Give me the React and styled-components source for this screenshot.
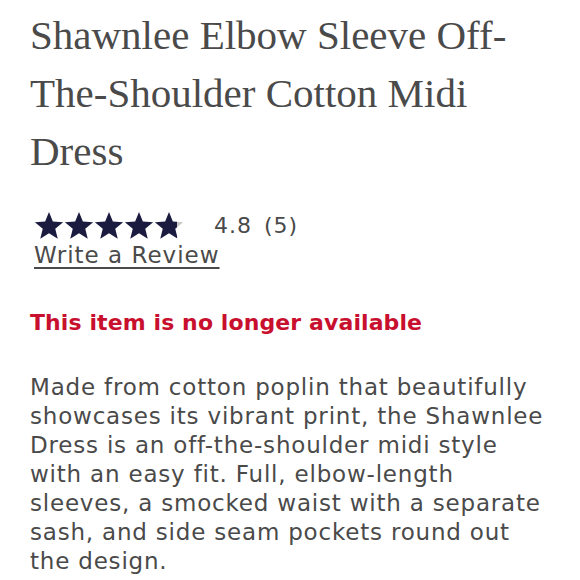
import React from "react";
import styled, { createGlobalStyle } from "styled-components";

const Global = createGlobalStyle`
  html, body { margin: 0; padding: 0; background: #fff; }
`;

const Page = styled.main`
  padding: 6px 0 0 30px;
  width: 580px;
  box-sizing: border-box;
`;

const Title = styled.h1`
  margin: 0;
  font-family: "Liberation Serif", serif;
  font-weight: 400;
  font-size: 41px;
  line-height: 58px;
  color: #4a4a4a;
`;

const Rating = styled.div`
  margin: 30px 0 0 4px;
  display: flex;
  flex-direction: column;
  align-items: flex-start;
`;

const StarsRow = styled.div`
  display: flex;
  align-items: center;
  gap: 30px;
`;

const Stars = styled.div`
  display: flex;
`;

const sans = `"DejaVu Sans", sans-serif`;

const Score = styled.span`
  font-family: ${sans};
  font-size: 22px;
  color: #4a4a4a;
  letter-spacing: 1px;
  word-spacing: 4px;
`;

const ReviewLink = styled.a`
  font-family: ${sans};
  font-size: 23px;
  line-height: 30px;
  letter-spacing: 1px;
  color: #4a4a4a;
  text-decoration: underline;
  text-decoration-thickness: 2px;
  text-underline-offset: 4px;
`;

const Notice = styled.p`
  margin: 40px 0 0;
  font-family: ${sans};
  font-weight: 600;
  font-size: 22px;
  letter-spacing: 0.1px;
  color: #c8102e;
`;

const Description = styled.p`
  margin: 38px 0 0;
  font-family: ${sans};
  font-size: 23px;
  line-height: 29px;
  letter-spacing: 0.8px;
  color: #4a4a4a;
  white-space: nowrap;
`;

function Star({ fill = 1, id }) {
  return (
    <svg width="30" height="30" viewBox="0 0 24 24">
      <defs>
        <linearGradient id={id}>
          <stop offset={fill} stopColor="#1b1b40" />
          <stop offset={fill} stopColor="#c8c8c8" />
        </linearGradient>
      </defs>
      <path
        d="M12 1.5l3.1 7.6 8.2.6-6.3 5.2 2 8-7-4.4-7 4.4 2-8L.7 9.7l8.2-.6z"
        fill={`url(#${id})`}
      />
    </svg>
  );
}

const descLines = [
  "Made from cotton poplin that beautifully",
  "showcases its vibrant print, the Shawnlee",
  "Dress is an off-the-shoulder midi style",
  "with an easy fit. Full, elbow-length",
  "sleeves, a smocked waist with a separate",
  "sash, and side seam pockets round out",
  "the design.",
];

export default function App() {
  const rating = 4.8;
  return (
    <>
      <Global />
      <Page>
        <Title>
          Shawnlee Elbow Sleeve Off-
          <br />
          The-Shoulder Cotton Midi
          <br />
          Dress
        </Title>
        <Rating>
          <StarsRow>
            <Stars>
              {[0, 1, 2, 3, 4].map((i) => (
                <Star key={i} id={`s${i}`} fill={Math.max(0, Math.min(1, rating - i))} />
              ))}
            </Stars>
            <Score>4.8 (5)</Score>
          </StarsRow>
          <ReviewLink href="#">Write a Review</ReviewLink>
        </Rating>
        <Notice>This item is no longer available</Notice>
        <Description>
          {descLines.map((l, i) => (
            <React.Fragment key={i}>
              {l}
              {i < descLines.length - 1 && <br />}
            </React.Fragment>
          ))}
        </Description>
      </Page>
    </>
  );
}
